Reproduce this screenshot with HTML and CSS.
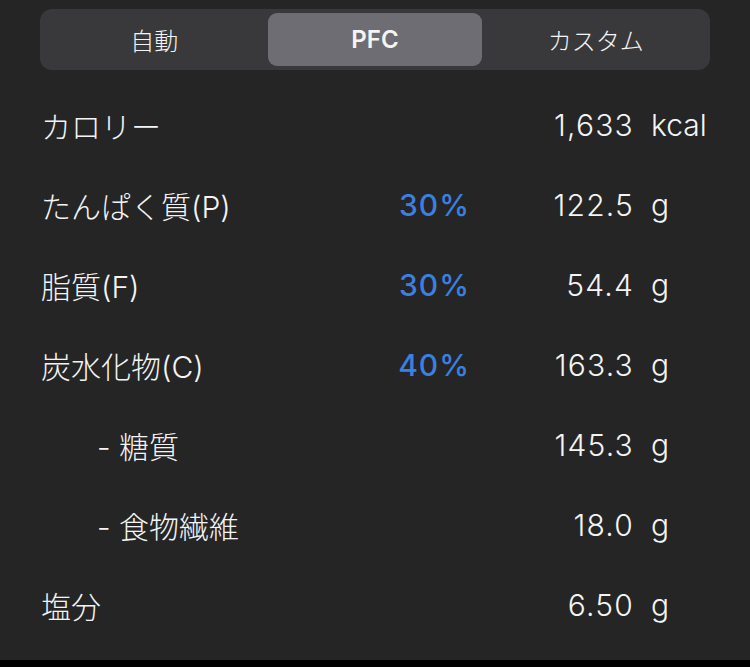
FILE: index.html
```html
<!DOCTYPE html>
<html lang="ja">
<head>
<meta charset="utf-8">
<link rel="stylesheet" href="styles.css">
</head>
<body>
<div class="screen">
  <div class="seg">
    <div class="seg-item">自動</div>
    <div class="seg-item active">PFC</div>
    <div class="seg-item">カスタム</div>
  </div>
  <div class="rows">
    <div class="row"><div class="label">カロリー</div><div class="pct"></div><div class="val">1,633</div><div class="unit">kcal</div></div>
    <div class="row"><div class="label">たんぱく質(P)</div><div class="pct">30%</div><div class="val">122.5</div><div class="unit">g</div></div>
    <div class="row"><div class="label">脂質(F)</div><div class="pct">30%</div><div class="val">54.4</div><div class="unit">g</div></div>
    <div class="row"><div class="label">炭水化物(C)</div><div class="pct">40%</div><div class="val">163.3</div><div class="unit">g</div></div>
    <div class="row"><div class="label sub">- 糖質</div><div class="pct"></div><div class="val">145.3</div><div class="unit">g</div></div>
    <div class="row"><div class="label sub">- 食物繊維</div><div class="pct"></div><div class="val">18.0</div><div class="unit">g</div></div>
    <div class="row"><div class="label">塩分</div><div class="pct"></div><div class="val">6.50</div><div class="unit">g</div></div>
  </div>
</div>
</body>
</html>
```
FILE: styles.css
```css
* { box-sizing: border-box; }
html, body { margin: 0; padding: 0; }
body {
  background: #000;
  width: 750px;
  height: 667px;
  overflow: hidden;
  font-family: "Inter", "Noto Sans CJK JP", sans-serif;
  font-weight: 300;
  color: #f4f4f4;
}
.screen {
  background: #252525;
  height: 660px;
  padding-top: 9px;
}
.seg {
  margin: 0 40px;
  height: 61px;
  border-radius: 12px;
  background: #39393b;
  padding: 4px;
  display: grid;
  grid-template-columns: 1fr 1fr 1fr;
}
.seg-item {
  display: flex;
  align-items: center;
  justify-content: center;
  font-size: 24px;
  color: #f4f4f4;
  border-radius: 9px;
}
.seg-item.active {
  background: #6e6d73;
  margin: 0 3px;
  font-weight: 600;
}
.rows {
  padding-top: 15px;
}
.row {
  height: 80px;
  display: grid;
  grid-template-columns: 326px 100px 167px 1fr;
  align-items: center;
  padding-left: 41px;
  font-size: 30px;
}
.label.sub { padding-left: 56px; }
.pct {
  text-align: right;
  color: #3b80e0;
  font-weight: 500;
  letter-spacing: 1px;
  margin-right: -3px;
}
.val {
  text-align: right;
  letter-spacing: 1.2px;
}
.unit { padding-left: 17px; }
```
